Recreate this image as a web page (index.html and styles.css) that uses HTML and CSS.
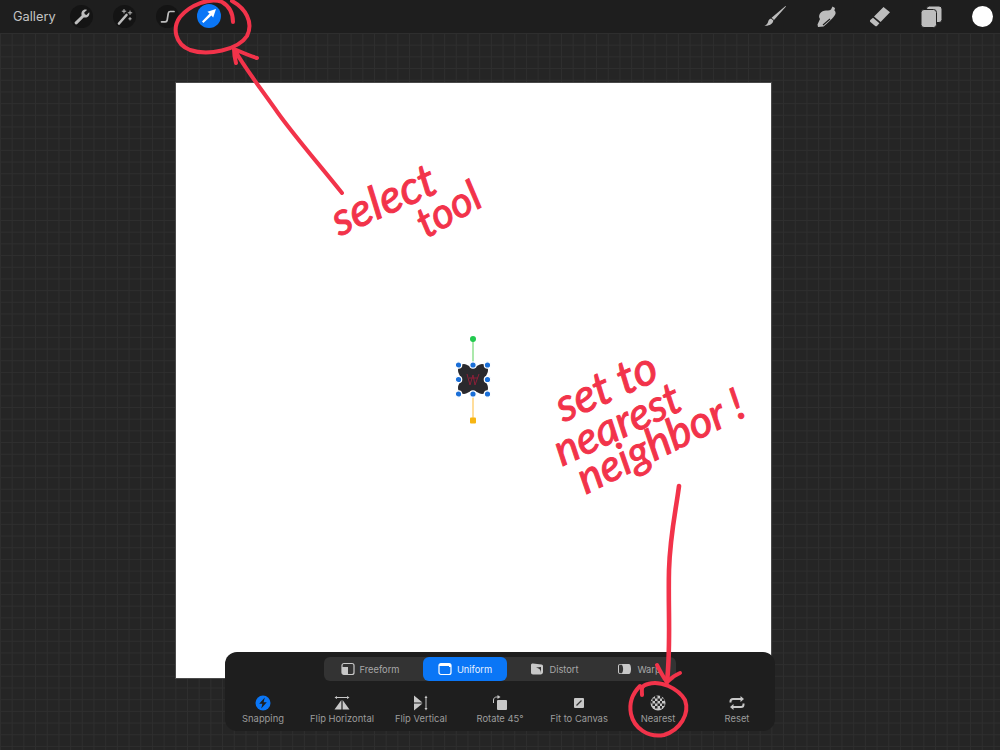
FILE: index.html
```html
<!DOCTYPE html>
<html>
  <head>
    <title>Procreate - Select Tool</title>
    <link rel="stylesheet" href="styles.css">
  </head>
  <body>
    <div class="topbar">
      <div class="tools-left">
        <span class="gallery">Gallery</span>
        <span class="round-btn">
          <svg width="18" height="18" viewBox="0 0 18 18"><path class="fill-grey" d="M2.5 16.2 L1.8 15.5 C1.4 15 1.4 14.4 1.9 13.9 L8.6 7.4 C8 5 8.8 3 10.6 2.1 C11.8 1.5 13 1.5 14 1.9 L11.2 4.6 L11.8 6.3 L13.5 6.9 L16.2 4.2 C16.6 5.4 16.4 6.8 15.6 7.9 C14.4 9.4 12.6 9.9 10.7 9.4 L4.2 16.1 C3.7 16.6 3 16.7 2.5 16.2 Z"/></svg>
        </span>
        <span class="round-btn">
          <svg width="18" height="18" viewBox="0 0 18 18"><path class="line-grey wide" d="M3 15.5 L10.5 7"/><path class="line-grey thin" d="M8 1.5 V5 M6.2 3.2 H9.8 M14 3 V6.5 M12.2 4.8 H15.8 M14 9.5 V12 M12.8 10.8 H15.2"/></svg>
        </span>
        <span class="round-btn">
          <svg width="18" height="18" viewBox="0 0 18 18"><path class="line-grey mid" d="M15 3.5 H11.2 C10 3.5 9.5 4.2 9.3 5.2 L8.2 12 C8 13.2 7.4 13.8 6.2 13.8 H2.5"/></svg>
        </span>
        <span class="round-btn blue">
          <svg width="18" height="18" viewBox="0 0 18 18"><path class="fill-white" d="M16 2 L7.4 4.8 L9.6 6.6 L2 14.6 L3.4 16 L11.4 8.4 L13.2 10.6 Z"/></svg>
        </span>
      </div>
      <div class="tools-right">
        <svg width="24" height="24" viewBox="0 0 24 24"><path class="fill-grey" d="M22.5 1 L23 1.6 L11 15 L8.6 12.8 Z M8 13.4 L10.4 15.6 C9.8 19 6.5 21.2 1.4 20.8 C3.8 19.6 4.8 18.4 5.2 16.4 C5.5 14.8 6.6 13.8 8 13.4 Z"/></svg>
        <svg width="24" height="24" viewBox="0 0 24 24"><path class="fill-grey" d="M17.5 1.5 L20 3 L19.4 5.4 C20.6 6.4 21 8 20.2 9.6 C19.2 11.6 17.4 13.6 15.2 15.6 L11.5 19 L8.5 21.5 L3 22 L2.5 19.5 L5 14 C3.8 12.5 3.8 10.5 5 8.5 C6.4 6.4 9 5.2 11.5 5.4 C13.5 5.6 15 5.4 16 4.6 Z"/><path class="line-cut" d="M8 20 L15 14 M11 21.5 L18 15.5"/></svg>
        <svg width="24" height="24" viewBox="0 0 24 24"><path class="fill-grey" d="M16.5 2 L23 7.2 L13.6 17 L7 11.6 Z M6 12.8 L12.4 18.2 L10.2 20.8 C9.6 21.4 8.8 21.5 8.2 21 L3.4 17 C2.8 16.4 2.8 15.6 3.3 15 Z"/></svg>
        <svg width="24" height="24" viewBox="0 0 24 24"><rect class="fill-grey dark-edge" x="7.5" y="1" width="15.5" height="16.5" rx="3"/><rect class="fill-grey dark-edge" x="2" y="4.5" width="15.5" height="18" rx="3"/></svg>
        <span class="color-dot"></span>
      </div>
    </div>

    <div class="stage">
      <div class="canvas">
        <div class="selection">
          <svg width="50" height="96" viewBox="0 0 50 96">
            <path class="stem-green" d="M25 6 V30"/>
            <path class="stem-yellow" d="M25 60 V86"/>
            <path class="shape" d="M16 30 C19 30 21 33 25 33 C29 33 31 30 34 30 C38 30 40 33 40 36 C40 40 37 42 37 45 C37 48 40 50 40 54 C40 57 38 60 34 60 C31 60 29 57 25 57 C21 57 19 60 16 60 C12 60 10 57 10 54 C10 50 13 48 13 45 C13 42 10 40 10 36 C10 33 12 30 16 30 Z"/>
            <path class="scribble" d="M19 40 L22 51 L25 41 L27 51 L31 40 M21 44 H30"/>
            <circle class="dot-green" cx="25" cy="5" r="3"/>
            <rect class="dot-yellow" x="22" y="83.5" width="6" height="6" rx="1"/>
            <g class="handles">
              <circle cx="10.5" cy="31" r="3.2"/>
              <circle cx="25" cy="31" r="3.2"/>
              <circle cx="39.5" cy="31" r="3.2"/>
              <circle cx="10.5" cy="45.5" r="3.2"/>
              <circle cx="39.5" cy="45.5" r="3.2"/>
              <circle cx="10.5" cy="60" r="3.2"/>
              <circle cx="25" cy="60" r="3.2"/>
              <circle cx="39.5" cy="60" r="3.2"/>
            </g>
          </svg>
        </div>
      </div>
    </div>

    <div class="panel">
      <div class="segments">
        <div class="segment first">
          <svg width="14" height="14" viewBox="0 0 14 14"><rect class="tab-frame" x="1" y="1.5" width="12" height="11" rx="2"/><path class="fill-light" d="M1 5 H7 V12.5 H3 C1.8 12.5 1 11.7 1 10.5 Z"/></svg>
          Freeform
        </div>
        <div class="segment on">
          <svg width="14" height="14" viewBox="0 0 14 14"><rect class="tab-frame white" x="1" y="1.5" width="12" height="11" rx="2"/><path class="fill-white" d="M1 3.5 C1 2.3 1.8 1.5 3 1.5 H11 C12.2 1.5 13 2.3 13 3.5 V5 H11 V4 H1 Z"/></svg>
          Uniform
        </div>
        <div class="segment">
          <svg width="14" height="14" viewBox="0 0 14 14"><path class="fill-light" d="M1 3 C1 2 2 1.4 3 1.6 L11.5 2.5 C12.4 2.6 13 3.3 13 4.2 V10 C13 11.4 12 12.5 10.6 12.5 H3 C1.8 12.5 1 11.7 1 10.5 Z"/><path class="fill-cut" d="M6 5.5 L11 5 V11 C11 8 9 6 6 5.5 Z"/></svg>
          Distort
        </div>
        <div class="segment">
          <svg width="15" height="14" viewBox="0 0 15 14"><path class="fill-light" d="M1 4 C1 2.8 2 2 3 2 H12 C13.5 2 14 5 14 7 C14 9 13.5 12 12 12 H3 C2 12 1 11.2 1 10 Z"/><path class="fill-cut" d="M5 2.8 C6.5 5 6.5 9 5 11.2 H3.2 C2.4 11.2 2 10.6 2 10 V4 C2 3.4 2.4 2.8 3.2 2.8 Z"/></svg>
          Warp
        </div>
      </div>
      <div class="actions">
        <div class="action on">
          <svg width="16" height="16" viewBox="0 0 16 16"><circle class="fill-blue" cx="8" cy="8" r="7.5"/><path class="fill-panel" d="M9.8 2.5 L4.2 8.8 H7.4 L6.2 13.5 L11.8 7.2 H8.6 Z"/></svg>
          <span>Snapping</span>
        </div>
        <div class="action">
          <svg width="18" height="16" viewBox="0 0 18 16"><path class="line-soft" d="M3 2.5 H15"/><path class="fill-light" d="M1.5 2.5 L4 1 V4 Z M16.5 2.5 L14 1 V4 Z M8.4 5 V14.5 H1.5 Z M9.6 5 L16.5 14.5 H9.6 Z"/></svg>
          <span>Flip Horizontal</span>
        </div>
        <div class="action">
          <svg width="18" height="16" viewBox="0 0 18 16"><path class="line-soft" d="M14 2.5 V13.5"/><path class="fill-light" d="M14 0.5 L15.5 3 H12.5 Z M14 15.5 L12.5 13 H15.5 Z M2 0.5 L10.5 7.4 H2 Z M2 8.6 H10.5 L2 15.5 Z"/></svg>
          <span>Flip Vertical</span>
        </div>
        <div class="action">
          <svg width="18" height="16" viewBox="0 0 18 16"><rect class="fill-light" x="6" y="5" width="10" height="10" rx="1"/><path class="line-soft" d="M2.5 8 V5 C2.5 3.2 3.8 2 5.5 2 H7"/><path class="fill-light" d="M6.5 0 L9.5 2 L6.5 4 Z"/></svg>
          <span>Rotate 45°</span>
        </div>
        <div class="action">
          <svg width="18" height="16" viewBox="0 0 18 16"><rect class="fill-light" x="4" y="3" width="10" height="10" rx="1"/><path class="line-dark" d="M6.5 10.5 L11.5 5.5"/></svg>
          <span>Fit to Canvas</span>
        </div>
        <div class="action">
          <svg width="16" height="16" viewBox="0 0 16 16"><circle class="fill-light" cx="8" cy="8" r="7.5"/><path class="checks" d="M5 1 H7.5 V3.5 H5 Z M10 1 H12 V3.5 H10 Z M2.5 3.5 H5 V6 H2.5 Z M7.5 3.5 H10 V6 H7.5 Z M12 3.5 H14.5 V6 H12 Z M0.5 6 H2.5 V8.5 H0.5 Z M5 6 H7.5 V8.5 H5 Z M10 6 H12 V8.5 H10 Z M2.5 8.5 H5 V11 H2.5 Z M7.5 8.5 H10 V11 H7.5 Z M12 8.5 H14.5 V11 H12 Z M5 11 H7.5 V13.5 H5 Z M10 11 H12 V13.5 H10 Z"/></svg>
          <span>Nearest</span>
        </div>
        <div class="action">
          <svg width="16" height="16" viewBox="0 0 16 16"><path class="line-reset" d="M1.5 7.5 V6.5 C1.5 5 2.5 4 4 4 H12.5 M14.5 8.5 V9.5 C14.5 11 13.5 12 12 12 H3.5"/><path class="fill-light" d="M11.5 1 L15 4 L11.5 7 Z M4.5 9 L1 12 L4.5 15 Z"/></svg>
          <span>Reset</span>
        </div>
      </div>
    </div>

    <!-- red marker notes drawn over the screenshot -->
    <svg class="ink" width="1000" height="750" viewBox="0 0 1000 750">
      <path d="M233 22 C233 13 229 6 222 2 C210 -3 190 5 180 17 C172 28 175 44 190 50 C208 56 238 50 247 36 C254 22 245 8 232 1"/>
      <path d="M342 193 C318 163 296 138 278 113 C262 90 246 70 234 49 M234 49 C241 52 250 56 257 58 M234 49 C234 54 235 59 236 63"/>
      <path d="M642 695 C642 690 640 686 648 684 C660 680 678 688 685 700 C690 714 680 730 664 735 C648 738 634 728 631 714 C629 704 632 694 640 686"/>
      <path class="ink-heavy" d="M679 486 C676 510 670 535 669 570 C668 610 671 645 667 682"/>
      <path d="M667 682 C663 677 660 671 657 665 M667 682 C671 678 675 675 680 673"/>
    </svg>
    <div class="note note-select">select</div>
    <div class="note note-tool">tool</div>
    <div class="note note-set">set to</div>
    <div class="note note-nearest">nearest</div>
    <div class="note note-neighbor">neighbor !</div>
  </body>
</html>
```

FILE: styles.css
```css
:root {
  --bar: #1e1e1e;
  --blue: #0a76f6;
  --grey: #bdbdbd;
  --ink: #f2334a;
}

body {
  margin: 0;
  width: 1000px;
  height: 750px;
  overflow: hidden;
  position: relative;
  background-color: #252525;
  background-image: linear-gradient(#2e2e2e 1px, transparent 1px), linear-gradient(90deg, #2e2e2e 1px, transparent 1px);
  background-size: 11.7px 11.7px;
  background-position: 0 33px;
  font-family: Inter, "Liberation Sans", sans-serif;
}

/* Top bar */
.topbar {
  height: 33px;
  background: var(--bar);
  display: flex;
  justify-content: space-between;
  align-items: center;
  padding: 0 7px 0 13px;
}

.tools-left {
  display: flex;
  align-items: center;
}

.gallery {
  width: 57px;
  font-size: 12.8px;
  color: #c4c4c4;
}

.round-btn {
  width: 23px;
  height: 23px;
  margin-right: 20px;
  border-radius: 50%;
  background: #141414;
  display: flex;
  justify-content: center;
  align-items: center;
}

.round-btn.blue {
  width: 24px;
  height: 24px;
  background: var(--blue);
  margin-left: -2px;
  margin-top: -1px;
}

.tools-right {
  display: flex;
  align-items: center;
  gap: 28px;
}

.color-dot {
  width: 21px;
  height: 21px;
  margin-left: 1px;
  border-radius: 50%;
  background: #fff;
}

/* Canvas */
.stage {
  padding: 50px 0 0 176px;
}

.canvas {
  width: 595px;
  height: 595px;
  background: #fff;
  box-shadow: 0 0 0 1px #4a4a4a;
  display: flex;
  justify-content: center;
}

.selection {
  margin-top: 251px;
  margin-right: 1px;
  height: 96px;
}

.selection svg {
  display: block;
}

.shape {
  fill: #2a292d;
}

.scribble {
  fill: none;
  stroke: #8a1f38;
  stroke-width: 1;
}

.stem-green {
  stroke: #8fe08f;
  stroke-width: 1.5;
}

.stem-yellow {
  stroke: #ffd27a;
  stroke-width: 1.5;
}

.dot-green {
  fill: #22c94f;
}

.dot-yellow {
  fill: #f7b512;
}

.handles circle {
  fill: #1a6fd8;
  stroke: #fff;
  stroke-width: 1.2;
}

/* Bottom panel */
.panel {
  position: absolute;
  left: 225px;
  top: 652px;
  width: 550px;
  height: 79px;
  background: var(--bar);
  border-radius: 12px;
  box-sizing: border-box;
  padding-top: 5px;
}

.segments {
  width: 352px;
  height: 24px;
  margin: 0 auto;
  background: #333;
  border-radius: 6px;
  display: grid;
  grid-template-columns: 99px 84px 95px 74px;
  font-size: 9.3px;
  color: #a8a8a8;
}

.segment {
  display: flex;
  justify-content: center;
  align-items: center;
  gap: 5px;
  border-radius: 6px;
}

.segment.first {
  padding-right: 7px;
}

.segment.on {
  background: var(--blue);
  color: #e8f1ff;
}

.actions {
  display: grid;
  grid-template-columns: repeat(7, 79px);
  justify-content: center;
  margin-top: 14px;
}

.action {
  display: flex;
  flex-direction: column;
  align-items: center;
  gap: 2px;
  font-size: 9.4px;
  color: #9c9c9c;
  white-space: nowrap;
}

.action svg {
  display: block;
}

.fill-grey {
  fill: var(--grey);
}

.fill-white {
  fill: #fff;
}

.fill-light {
  fill: #c8c8c8;
}

.fill-blue {
  fill: var(--blue);
}

.fill-panel {
  fill: var(--bar);
}

.fill-cut {
  fill: #333;
}

.line-cut {
  fill: none;
  stroke: var(--bar);
  stroke-width: 1.2;
}

.dark-edge {
  stroke: var(--bar);
  stroke-width: 1;
}

.line-grey {
  fill: none;
  stroke: var(--grey);
  stroke-linecap: round;
}

.line-grey.wide {
  stroke-width: 2.6;
}

.line-grey.mid {
  stroke-width: 1.7;
}

.line-grey.thin {
  stroke-width: 1;
}

.tab-frame {
  fill: none;
  stroke: #c8c8c8;
  stroke-width: 1.2;
}

.tab-frame.white {
  stroke: #fff;
}

.line-soft {
  fill: none;
  stroke: #c8c8c8;
  stroke-width: 1;
}

.line-dark {
  stroke: #333;
  stroke-width: 1.2;
}

.line-reset {
  fill: none;
  stroke: #c8c8c8;
  stroke-width: 2;
}

.checks {
  fill: #2a2a2a;
}

/* Marker notes */
.ink {
  position: absolute;
  left: 0;
  top: 0;
  pointer-events: none;
}

.ink path {
  fill: none;
  stroke: var(--ink);
  stroke-width: 4;
  stroke-linecap: round;
  stroke-linejoin: round;
}

.ink .ink-heavy {
  stroke-width: 4.6;
}

.note {
  position: absolute;
  font-family: Lato, "Open Sans", sans-serif;
  font-style: italic;
  color: var(--ink);
  -webkit-text-stroke: 1px var(--ink);
  line-height: 1;
  white-space: nowrap;
  transform-origin: left bottom;
}

.note-select {
  left: 342px;
  top: 196px;
  font-size: 46px;
  transform: rotate(-24deg);
}

.note-tool {
  left: 429px;
  top: 201px;
  font-size: 42px;
  transform: rotate(-30deg);
}

.note-set {
  left: 566px;
  top: 382px;
  font-size: 46px;
  transform: rotate(-24deg);
}

.note-nearest {
  left: 564px;
  top: 427px;
  font-size: 44px;
  transform: rotate(-25deg);
}

.note-neighbor {
  left: 588px;
  top: 455px;
  font-size: 44px;
  transform: rotate(-26deg);
}
```
